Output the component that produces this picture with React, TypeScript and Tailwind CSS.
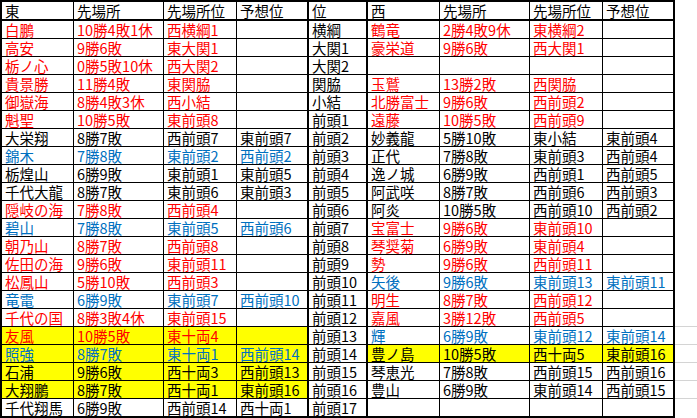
import React from 'react';

type C = 'r' | 'b' | 'k';

type Row = {
  e: [string, string, string, string];
  ec: C;
  ey?: boolean;
  rank: string;
  w: [string, string, string, string];
  wc: C;
  wy?: boolean;
};

const rows: Row[] = [
  { e: ['白鵬', '10勝4敗1休', '西横綱1', ''], ec: 'r', rank: '横綱', w: ['鶴竜', '2勝4敗9休', '東横綱2', ''], wc: 'r' },
  { e: ['高安', '9勝6敗', '東大関1', ''], ec: 'r', rank: '大関1', w: ['豪栄道', '9勝6敗', '西大関1', ''], wc: 'r' },
  { e: ['栃ノ心', '0勝5敗10休', '西大関2', ''], ec: 'r', rank: '大関2', w: ['', '', '', ''], wc: 'k' },
  { e: ['貴景勝', '11勝4敗', '東関脇', ''], ec: 'r', rank: '関脇', w: ['玉鷲', '13勝2敗', '西関脇', ''], wc: 'r' },
  { e: ['御嶽海', '8勝4敗3休', '西小結', ''], ec: 'r', rank: '小結', w: ['北勝富士', '9勝6敗', '西前頭2', ''], wc: 'r' },
  { e: ['魁聖', '10勝5敗', '東前頭8', ''], ec: 'r', rank: '前頭1', w: ['遠藤', '10勝5敗', '西前頭9', ''], wc: 'r' },
  { e: ['大栄翔', '8勝7敗', '西前頭7', '東前頭7'], ec: 'k', rank: '前頭2', w: ['妙義龍', '5勝10敗', '東小結', '東前頭4'], wc: 'k' },
  { e: ['錦木', '7勝8敗', '東前頭2', '西前頭2'], ec: 'b', rank: '前頭3', w: ['正代', '7勝8敗', '東前頭3', '西前頭4'], wc: 'k' },
  { e: ['栃煌山', '6勝9敗', '東前頭1', '東前頭5'], ec: 'k', rank: '前頭4', w: ['逸ノ城', '6勝9敗', '西前頭1', '西前頭5'], wc: 'k' },
  { e: ['千代大龍', '8勝7敗', '東前頭6', '東前頭3'], ec: 'k', rank: '前頭5', w: ['阿武咲', '8勝7敗', '西前頭6', '西前頭3'], wc: 'k' },
  { e: ['隠岐の海', '7勝8敗', '西前頭4', ''], ec: 'r', rank: '前頭6', w: ['阿炎', '10勝5敗', '西前頭10', '西前頭2'], wc: 'k' },
  { e: ['碧山', '7勝8敗', '東前頭5', '西前頭6'], ec: 'b', rank: '前頭7', w: ['宝富士', '9勝6敗', '東前頭10', ''], wc: 'r' },
  { e: ['朝乃山', '8勝7敗', '西前頭8', ''], ec: 'r', rank: '前頭8', w: ['琴奨菊', '6勝9敗', '東前頭4', ''], wc: 'r' },
  { e: ['佐田の海', '9勝6敗', '東前頭11', ''], ec: 'r', rank: '前頭9', w: ['勢', '9勝6敗', '西前頭11', ''], wc: 'r' },
  { e: ['松鳳山', '5勝10敗', '西前頭3', ''], ec: 'r', rank: '前頭10', w: ['矢後', '9勝6敗', '東前頭13', '東前頭11'], wc: 'b' },
  { e: ['竜電', '6勝9敗', '東前頭7', '西前頭10'], ec: 'b', rank: '前頭11', w: ['明生', '8勝7敗', '西前頭12', ''], wc: 'r' },
  { e: ['千代の国', '8勝3敗4休', '東前頭15', ''], ec: 'r', rank: '前頭12', w: ['嘉風', '3勝12敗', '西前頭5', ''], wc: 'r' },
  { e: ['友風', '10勝5敗', '東十両4', ''], ec: 'r', ey: true, rank: '前頭13', w: ['輝', '6勝9敗', '東前頭12', '東前頭14'], wc: 'b' },
  { e: ['照強', '8勝7敗', '東十両1', '西前頭14'], ec: 'b', ey: true, rank: '前頭14', w: ['豊ノ島', '10勝5敗', '西十両5', '東前頭16'], wc: 'k', wy: true },
  { e: ['石浦', '9勝6敗', '西十両3', '西前頭13'], ec: 'k', ey: true, rank: '前頭15', w: ['琴恵光', '7勝8敗', '西前頭15', '西前頭16'], wc: 'k' },
  { e: ['大翔鵬', '8勝7敗', '西十両1', '東前頭16'], ec: 'k', ey: true, rank: '前頭16', w: ['豊山', '6勝9敗', '東前頭14', '西前頭15'], wc: 'k' },
  { e: ['千代翔馬', '6勝9敗', '西前頭14', '西十両1'], ec: 'k', rank: '前頭17', w: ['', '', '', ''], wc: 'k' },
];

const color: Record<C, string> = {
  r: 'text-[#ff0000]',
  b: 'text-[#0070c0]',
  k: 'text-black',
};

// columns 3, 4 and 8 carry the thick right rule
const thick = [false, false, false, true, true, false, false, false, true];

function Cell({ text, col, c, y, last }: { text: string; col: number; c: C; y?: boolean; last?: boolean }) {
  return (
    <div
      className={[
        'whitespace-nowrap border-black pl-[3px] leading-[17px]',
        thick[col] ? 'border-r-2' : 'border-r',
        last ? 'border-b-2' : 'border-b',
        y ? 'bg-[#ffff00]' : 'bg-white',
        color[c],
      ].join(' ')}
    >
      {text}
    </div>
  );
}

const headers = ['東', '先場所', '先場所位', '予想位', '位', '西', '先場所', '先場所位', '予想位'];

export default function App() {
  return (
    <div className="flex h-[418px] w-[697px] bg-white font-['Noto_Sans_CJK_JP',sans-serif] text-[14.5px] text-black">
      <div className="grid h-[418px] w-[675px] shrink-0 grid-cols-[72px_90px_73px_72px_59px_72px_90px_73px_72px] grid-rows-[19px_repeat(21,18px)_19px] border-l-2 border-t-2 border-black">
        {headers.map((h, i) => (
          <div
            key={i}
            className={`whitespace-nowrap border-b-2 border-black pl-[3px] leading-[17px] ${thick[i] ? 'border-r-2' : 'border-r'}`}
          >
            {h}
          </div>
        ))}
        {rows.map((r, i) => {
          const last = i === rows.length - 1;
          return (
            <React.Fragment key={i}>
              {r.e.map((t, j) => (
                <Cell key={`e${j}`} text={t} col={j} c={r.ec} y={r.ey} last={last} />
              ))}
              <Cell text={r.rank} col={4} c="k" last={last} />
              {r.w.map((t, j) => (
                <Cell key={`w${j}`} text={t} col={5 + j} c={r.wc} y={r.wy} last={last} />
              ))}
            </React.Fragment>
          );
        })}
      </div>

      {/* sheet gridlines to the right of the table */}
      <div className="flex w-[22px] flex-col">
        <div className="h-[21px] shrink-0" />
        {rows.map((_, i) => (
          <div
            key={i}
            className={`h-[18px] shrink-0 ${i >= 16 && i <= 20 ? 'border-b border-[#d4d4d4]' : ''}`}
          />
        ))}
      </div>
    </div>
  );
}
